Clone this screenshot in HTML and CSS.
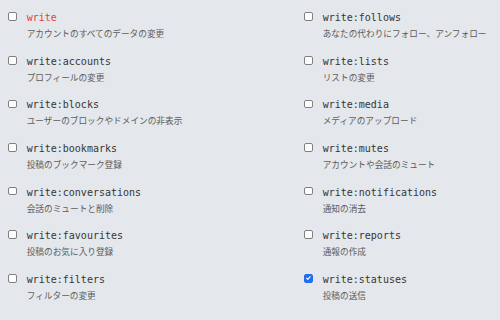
FILE: index.html
```html
<!DOCTYPE html>
<html lang="ja">
<head>
<meta charset="utf-8">
<link rel="stylesheet" href="styles.css">
</head>
<body>
<div class="scopes">
  <label class="scope"><span class="cb"></span><span class="txt"><span class="code danger">write</span><span class="desc">アカウントのすべてのデータの変更</span></span></label>
  <label class="scope"><span class="cb"></span><span class="txt"><span class="code">write:follows</span><span class="desc">あなたの代わりにフォロー、アンフォロー</span></span></label>
  <label class="scope"><span class="cb"></span><span class="txt"><span class="code">write:accounts</span><span class="desc">プロフィールの変更</span></span></label>
  <label class="scope"><span class="cb"></span><span class="txt"><span class="code">write:lists</span><span class="desc">リストの変更</span></span></label>
  <label class="scope"><span class="cb"></span><span class="txt"><span class="code">write:blocks</span><span class="desc">ユーザーのブロックやドメインの非表示</span></span></label>
  <label class="scope"><span class="cb"></span><span class="txt"><span class="code">write:media</span><span class="desc">メディアのアップロード</span></span></label>
  <label class="scope"><span class="cb"></span><span class="txt"><span class="code">write:bookmarks</span><span class="desc">投稿のブックマーク登録</span></span></label>
  <label class="scope"><span class="cb"></span><span class="txt"><span class="code">write:mutes</span><span class="desc">アカウントや会話のミュート</span></span></label>
  <label class="scope"><span class="cb"></span><span class="txt"><span class="code">write:conversations</span><span class="desc">会話のミュートと削除</span></span></label>
  <label class="scope"><span class="cb"></span><span class="txt"><span class="code">write:notifications</span><span class="desc">通知の消去</span></span></label>
  <label class="scope"><span class="cb"></span><span class="txt"><span class="code">write:favourites</span><span class="desc">投稿のお気に入り登録</span></span></label>
  <label class="scope"><span class="cb"></span><span class="txt"><span class="code">write:reports</span><span class="desc">通報の作成</span></span></label>
  <label class="scope"><span class="cb"></span><span class="txt"><span class="code">write:filters</span><span class="desc">フィルターの変更</span></span></label>
  <label class="scope"><span class="cb checked"><svg viewBox="0 0 10 10" width="9" height="9"><path d="M2.3 5.2 L4.2 7.1 L7.8 2.9" fill="none" stroke="#fff" stroke-width="1.6" stroke-linecap="round" stroke-linejoin="round"/></svg></span><span class="txt"><span class="code">write:statuses</span><span class="desc">投稿の送信</span></span></label>
</div>
</body>
</html>
```
FILE: styles.css
```css
html, body {
  margin: 0;
  padding: 0;
  background: #e4e7eb;
}
body {
  width: 500px;
  height: 320px;
  overflow: hidden;
}
.scopes {
  display: grid;
  grid-template-columns: 296px 1fr;
  row-gap: 16.6px;
  padding: 12.2px 0 0 8px;
}
.scope {
  display: flex;
  align-items: flex-start;
  gap: 10px;
}
.cb {
  flex: none;
  box-sizing: border-box;
  width: 8.7px;
  height: 8.7px;
  margin-top: 0.2px;
  border: 1px solid #808080;
  border-radius: 2px;
  background: #fff;
  display: flex;
  align-items: center;
  justify-content: center;
}
.cb.checked {
  background: #1f6ff2;
  border-color: #1f6ff2;
}
.cb svg {
  display: block;
  width: 8px;
  height: 8px;
}
.txt {
  display: flex;
  flex-direction: column;
}
.code {
  font-family: "DejaVu Sans Mono", monospace;
  font-size: 10px;
  line-height: 12px;
  color: #363636;
}
.code.danger {
  color: #e4423b;
}
.desc {
  margin-top: 3px;
  font-family: "Noto Sans CJK JP", sans-serif;
  font-size: 8.67px;
  line-height: 12px;
  color: #5c5c5c;
}
```
